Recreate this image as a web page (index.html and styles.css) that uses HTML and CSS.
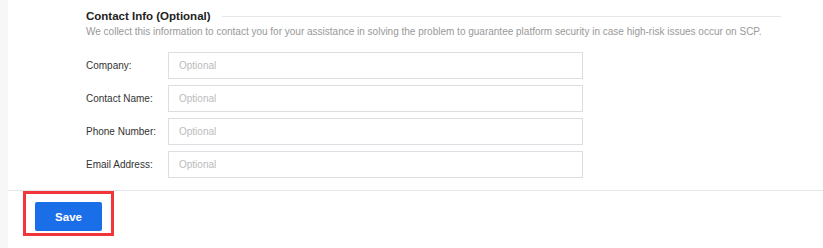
FILE: index.html
```html
<!DOCTYPE html>
<html lang="en">
<head>
    <meta charset="UTF-8">
    <meta name="viewport" content="width=device-width, initial-scale=1.0">
    <title>Contact Info</title>
    <link rel="stylesheet" href="styles.css">
</head>
<body>
    <div class="page">
        <div class="rail"></div>
        <div class="content">
            <div class="section">
                <div class="section-title">
                    <h3>Contact Info (Optional)</h3>
                    <span class="rule"></span>
                </div>
                <p class="hint">We collect this information to contact you for your assistance in solving the problem to guarantee platform security in case high-risk issues occur on SCP.</p>

                <div class="form">
                    <div class="row">
                        <label for="company">Company:</label>
                        <input type="text" id="company" placeholder="Optional">
                    </div>
                    <div class="row">
                        <label for="contactName">Contact Name:</label>
                        <input type="text" id="contactName" placeholder="Optional">
                    </div>
                    <div class="row">
                        <label for="phone">Phone Number:</label>
                        <input type="text" id="phone" placeholder="Optional">
                    </div>
                    <div class="row">
                        <label for="email">Email Address:</label>
                        <input type="text" id="email" placeholder="Optional">
                    </div>
                </div>
            </div>

            <div class="footer">
                <div class="save-wrap">
                    <button class="btn-save">Save</button>
                </div>
            </div>
        </div>
    </div>
</body>
</html>
```

FILE: styles.css
```css
body {
    margin: 0;
    font-family: "Liberation Sans", Arial, sans-serif;
    background-color: #fff;
}
.page {
    display: flex;
    height: 248px;
}
.rail {
    width: 8px;
    background-color: #f7f7f8;
    flex-shrink: 0;
}
.content {
    flex: 1;
}
.section {
    padding: 7px 42px 12px 78px;
}
.section-title {
    display: flex;
    align-items: center;
    gap: 11px;
    height: 18px;
}
.section-title h3 {
    margin: 0;
    font-size: 11.5px;
    font-weight: bold;
    color: #222;
    white-space: nowrap;
}
.rule {
    flex: 1;
    height: 1px;
    background-color: #e5e6ea;
}
.hint {
    margin: 0;
    font-size: 10px;
    line-height: 14px;
    color: #999;
    white-space: nowrap;
}
.form {
    margin-top: 13px;
    display: flex;
    flex-direction: column;
    gap: 6px;
}
.row {
    display: flex;
    align-items: center;
}
.row label {
    width: 82px;
    font-size: 10px;
    color: #333;
}
.row input {
    width: 415px;
    height: 27px;
    box-sizing: border-box;
    border: 1px solid #dcdee2;
    border-radius: 0;
    padding: 0 10px;
    font-family: inherit;
    font-size: 10px;
    color: #333;
    outline: none;
}
.row input::placeholder {
    color: #bbb;
}
.footer {
    border-top: 1px solid #e5e6ea;
    padding: 11px 27px;
}
.save-wrap {
    position: relative;
    display: inline-block;
    vertical-align: top;
}
.save-wrap::after {
    content: "";
    position: absolute;
    left: -12px;
    top: -11px;
    width: 91px;
    height: 45px;
    box-sizing: border-box;
    border: 3px solid #f0353b;
    pointer-events: none;
}
.btn-save {
    width: 67px;
    height: 29px;
    background-color: #1a6ee8;
    color: #fff;
    border: none;
    border-radius: 2px;
    font-family: inherit;
    font-size: 11.5px;
    font-weight: bold;
    cursor: pointer;
    display: block;
}
.btn-save:hover {
    background-color: #1561d4;
}
```
